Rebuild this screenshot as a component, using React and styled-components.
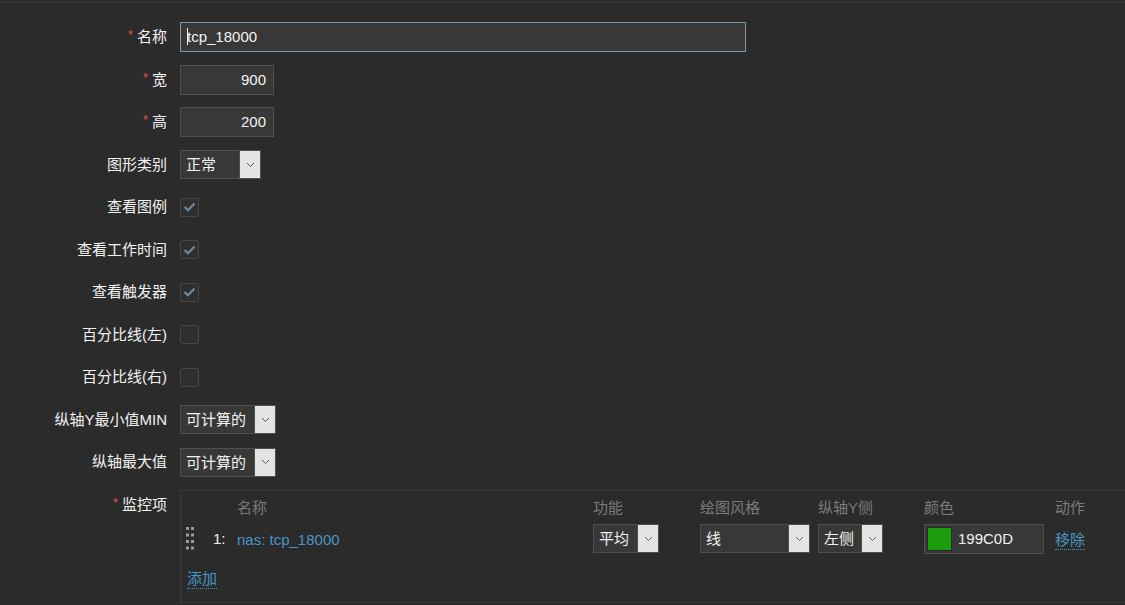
import React from 'react';
import styled, { createGlobalStyle } from 'styled-components';

const GlobalStyle = createGlobalStyle`
  html, body {
    margin: 0;
    padding: 0;
    background: #2b2b2b;
  }
  body {
    font-family: "Liberation Sans", "Noto Sans CJK SC", Arial, sans-serif;
    font-size: 15px;
    color: #f2f2f2;
    overflow: hidden;
  }
`;

const Page = styled.div`
  width: 1125px;
  height: 605px;
  padding-top: 2px;
  box-sizing: border-box;
`;

const Form = styled.div`
  border-top: 1px solid #3a3a3a;
  padding-top: 12.75px;
  display: flex;
  flex-direction: column;
`;

const Row = styled.div`
  display: grid;
  grid-template-columns: 180px 1fr;
  align-items: ${(p) => (p.$top ? 'start' : 'center')};
  padding: 6.25px 0;
  height: ${(p) => (p.$top ? 'auto' : '30px')};
`;

const Label = styled.div`
  text-align: right;
  padding-right: 13px;
  height: 30px;
  line-height: 30px;
  white-space: nowrap;
`;

const Required = styled.span`
  color: #e0524f;
  font-size: 13px;
  line-height: 0;
  vertical-align: 3px;
  margin-right: 4px;
`;

const TextInput = styled.div`
  box-sizing: border-box;
  width: ${(p) => p.$w}px;
  height: 30px;
  line-height: 28px;
  padding: 0 7px 0 6px;
  background: #383838;
  border: 1px solid ${(p) => (p.$focus ? '#7c9ba7' : '#4f4f4f')};
  text-align: ${(p) => (p.$right ? 'right' : 'left')};
  color: #f2f2f2;
`;

const Caret = styled.span`
  display: inline-block;
  width: 1px;
  height: 17px;
  background: #f2f2f2;
  vertical-align: -3px;
  margin-right: -1px;
`;

const SelectBox = styled.div`
  box-sizing: border-box;
  width: ${(p) => p.$w}px;
  height: 29px;
  display: flex;
  background: #383838;
  border: 1px solid #4f4f4f;
`;

const SelectValue = styled.div`
  flex: 1;
  line-height: 27px;
  padding-left: 5px;
  white-space: nowrap;
  overflow: hidden;
`;

const SelectButton = styled.div`
  width: 20px;
  background: #e4e4e4;
  display: flex;
  align-items: center;
  justify-content: center;
  border-left: 1px solid #4f4f4f;
`;

const Checkbox = styled.div`
  box-sizing: border-box;
  width: 19px;
  height: 19px;
  border: 1px solid #474747;
  border-radius: 2px;
  background: #2f2f2f;
  display: flex;
  align-items: center;
  justify-content: center;
`;

const ItemsBox = styled.div`
  box-sizing: border-box;
  width: 960px;
  border: 1px solid #3b3b3b;
  padding: 2px 5px 9px 5px;
`;

const ItemsGrid = styled.div`
  display: grid;
  grid-template-columns: 27px 24px 356px 107px 118px 106px 131px auto;
  align-items: center;
`;

const Head = styled.div`
  height: 30px;
  line-height: 30px;
  color: #7b7b7b;
  white-space: nowrap;
`;

const Cell = styled.div`
  height: 32px;
  display: flex;
  align-items: center;
  white-space: nowrap;
`;

const Link = styled.span`
  color: #4796c4;
  border-bottom: ${(p) => (p.$dotted ? '1px dotted #4796c4' : 'none')};
  line-height: 18px;
  padding-top: 3px;
`;

const AddRow = styled.div`
  margin-top: 8px;
  height: 30px;
  display: flex;
  align-items: center;
  padding-left: 1px;
`;

const ColorInput = styled.div`
  box-sizing: border-box;
  width: 120px;
  height: 30px;
  display: flex;
  align-items: center;
  gap: 6px;
  padding-left: 2px;
  background: #383838;
  border: 1px solid #4f4f4f;
`;

const Swatch = styled.div`
  width: 23px;
  height: 22px;
  background: #1a9c0d;
  border: 1px solid #2a2a2a;
`;

const Chevron = () => (
  <svg width="9" height="6" viewBox="0 0 9 6">
    <path d="M1 1 L4.5 4.5 L8 1" fill="none" stroke="#5a5a5a" strokeWidth="1" />
  </svg>
);

const Check = () => (
  <svg width="13" height="10" viewBox="0 0 13 10">
    <path d="M1.5 5 L5 8.3 L11.5 1.5" fill="none" stroke="#71879a" strokeWidth="2.2" />
  </svg>
);

const Handle = () => (
  <svg width="8" height="24" viewBox="0 0 8 24">
    {[0, 6.5, 13, 19.5].map((y) =>
      [0, 5].map((x) => <rect key={`${x}-${y}`} x={x} y={y} width="3" height="3" fill="#9a9a9a" />)
    )}
  </svg>
);

const Select = ({ w, value }) => (
  <SelectBox $w={w}>
    <SelectValue>{value}</SelectValue>
    <SelectButton>
      <Chevron />
    </SelectButton>
  </SelectBox>
);

const checks = [
  ['查看图例', true],
  ['查看工作时间', true],
  ['查看触发器', true],
  ['百分比线(左)', false],
  ['百分比线(右)', false],
];

export default function App() {
  return (
    <Page>
      <GlobalStyle />
      <Form>
        <Row>
          <Label><Required>*</Required>名称</Label>
          <TextInput $w={566} $focus><Caret />tcp_18000</TextInput>
        </Row>
        <Row>
          <Label><Required>*</Required>宽</Label>
          <TextInput $w={94} $right>900</TextInput>
        </Row>
        <Row>
          <Label><Required>*</Required>高</Label>
          <TextInput $w={94} $right>200</TextInput>
        </Row>
        <Row>
          <Label>图形类别</Label>
          <Select w={81} value="正常" />
        </Row>
        {checks.map(([label, on]) => (
          <Row key={label}>
            <Label>{label}</Label>
            <Checkbox>{on && <Check />}</Checkbox>
          </Row>
        ))}
        <Row>
          <Label>纵轴Y最小值MIN</Label>
          <Select w={96} value="可计算的" />
        </Row>
        <Row>
          <Label>纵轴最大值</Label>
          <Select w={96} value="可计算的" />
        </Row>
        <Row $top>
          <Label><Required>*</Required>监控项</Label>
          <ItemsBox>
            <ItemsGrid>
              <Head />
              <Head />
              <Head>名称</Head>
              <Head>功能</Head>
              <Head>绘图风格</Head>
              <Head>纵轴Y侧</Head>
              <Head>颜色</Head>
              <Head>动作</Head>

              <Cell><Handle /></Cell>
              <Cell>1:</Cell>
              <Cell><Link>nas: tcp_18000</Link></Cell>
              <Cell><Select w={66} value="平均" /></Cell>
              <Cell><Select w={110} value="线" /></Cell>
              <Cell><Select w={65} value="左侧" /></Cell>
              <Cell>
                <ColorInput>
                  <Swatch />
                  199C0D
                </ColorInput>
              </Cell>
              <Cell><Link $dotted>移除</Link></Cell>
            </ItemsGrid>
            <AddRow>
              <Link $dotted>添加</Link>
            </AddRow>
          </ItemsBox>
        </Row>
      </Form>
    </Page>
  );
}
